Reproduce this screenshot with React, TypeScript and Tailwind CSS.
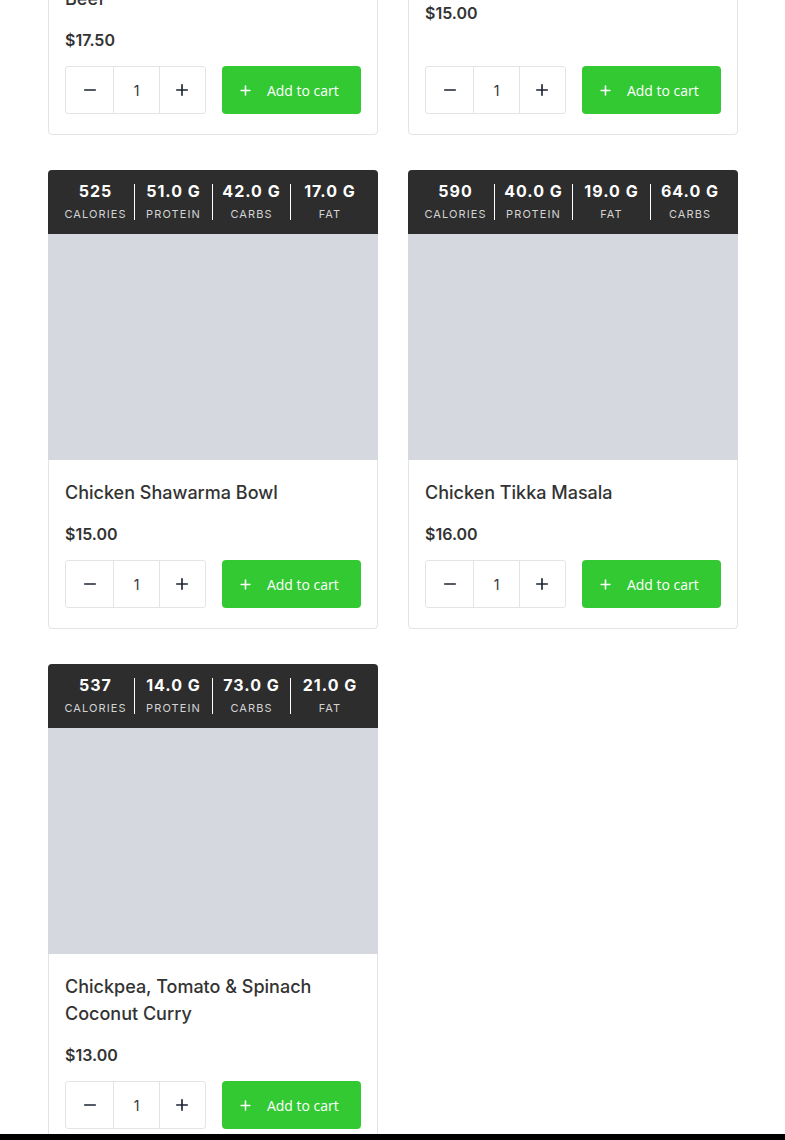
import { Minus, Plus } from 'lucide-react';

type Meal = {
  name: string;
  price: string;
  macros: { value: string; label: string }[];
};

const meals: Meal[] = [
  {
    name: 'Korean Bulgogi Style Lean Ground Beef',
    price: '$17.50',
    macros: [
      { value: '610', label: 'Calories' },
      { value: '45.0 G', label: 'Protein' },
      { value: '52.0 G', label: 'Carbs' },
      { value: '22.0 G', label: 'Fat' },
    ],
  },
  {
    name: 'Turkey Chili',
    price: '$15.00',
    macros: [
      { value: '480', label: 'Calories' },
      { value: '42.0 G', label: 'Protein' },
      { value: '38.0 G', label: 'Carbs' },
      { value: '14.0 G', label: 'Fat' },
    ],
  },
  {
    name: 'Chicken Shawarma Bowl',
    price: '$15.00',
    macros: [
      { value: '525', label: 'Calories' },
      { value: '51.0 G', label: 'Protein' },
      { value: '42.0 G', label: 'Carbs' },
      { value: '17.0 G', label: 'Fat' },
    ],
  },
  {
    name: 'Chicken Tikka Masala',
    price: '$16.00',
    macros: [
      { value: '590', label: 'Calories' },
      { value: '40.0 G', label: 'Protein' },
      { value: '19.0 G', label: 'Fat' },
      { value: '64.0 G', label: 'Carbs' },
    ],
  },
  {
    name: 'Chickpea, Tomato & Spinach Coconut Curry',
    price: '$13.00',
    macros: [
      { value: '537', label: 'Calories' },
      { value: '14.0 G', label: 'Protein' },
      { value: '73.0 G', label: 'Carbs' },
      { value: '21.0 G', label: 'Fat' },
    ],
  },
];

function MealCard({ meal }: { meal: Meal }) {
  return (
    <div className="flex flex-col rounded-[4px] border border-[#e4e4e4] bg-white">
      {/* Macros bar */}
      <div className="grid h-16 grid-cols-4 items-center rounded-t-[4px] bg-[#2d2d2d] px-[9px] -mx-px -mt-px">
        {meal.macros.map((m, i) => (
          <div
            key={i}
            className={`flex h-9 flex-col items-center justify-center pb-[2px] ${i < 3 ? 'border-r border-white' : ''}`}
          >
            <span className="text-[16px] font-bold leading-5 tracking-[1px] text-white">{m.value}</span>
            <span className="mt-[6px] text-[11px] uppercase leading-[14px] tracking-[1.1px] text-[#d4d4d4]">
              {m.label}
            </span>
          </div>
        ))}
      </div>

      {/* Image placeholder */}
      <div className="h-[226px] bg-[#d5d8df] -mx-px" />

      <div className="flex flex-1 flex-col px-4 pb-5 pt-[19px]">
        <h3 className="text-[18px] font-medium leading-[27px] text-[#333]">{meal.name}</h3>
        <p className="mt-4 text-[16px] font-semibold leading-6 text-[#333]">{meal.price}</p>
        <div className="mt-auto flex gap-4 pt-[14px]">
          <div className="flex h-12 w-[142px] rounded-[3px] border border-[#e2e4e8]">
            <button className="flex w-[47px] items-center justify-center text-[#1b2533]">
              <Minus size={18} strokeWidth={2.2} />
            </button>
            <div className="flex w-[47px] items-center justify-center border-x border-[#e2e4e8] text-[14px] text-[#333]">
              1
            </div>
            <button className="flex flex-1 items-center justify-center text-[#1b2533]">
              <Plus size={18} strokeWidth={2.2} />
            </button>
          </div>
          <button className="flex h-12 w-[140px] items-center gap-[14px] rounded-[4px] bg-[#33c933] px-4 text-white">
            <Plus size={15} strokeWidth={2.5} />
            <span className="text-[14px]" style={{ fontFamily: '"Open Sans", sans-serif' }}>
              Add to cart
            </span>
          </button>
        </div>
      </div>
    </div>
  );
}

export default function App() {
  return (
    <div
      className="relative h-[1140px] overflow-hidden bg-white"
      style={{ fontFamily: 'Inter, "Noto Sans", sans-serif' }}
    >
      <div className="-mt-[351px] pl-12">
        <div className="grid w-[690px] grid-cols-2 gap-x-[30px] gap-y-[35px]">
          {meals.map((meal, i) => (
            <MealCard key={i} meal={meal} />
          ))}
        </div>
      </div>
      {/* Bottom bar peeking in */}
      <div className="absolute bottom-0 left-0 right-0 h-[6px] bg-black" />
    </div>
  );
}
